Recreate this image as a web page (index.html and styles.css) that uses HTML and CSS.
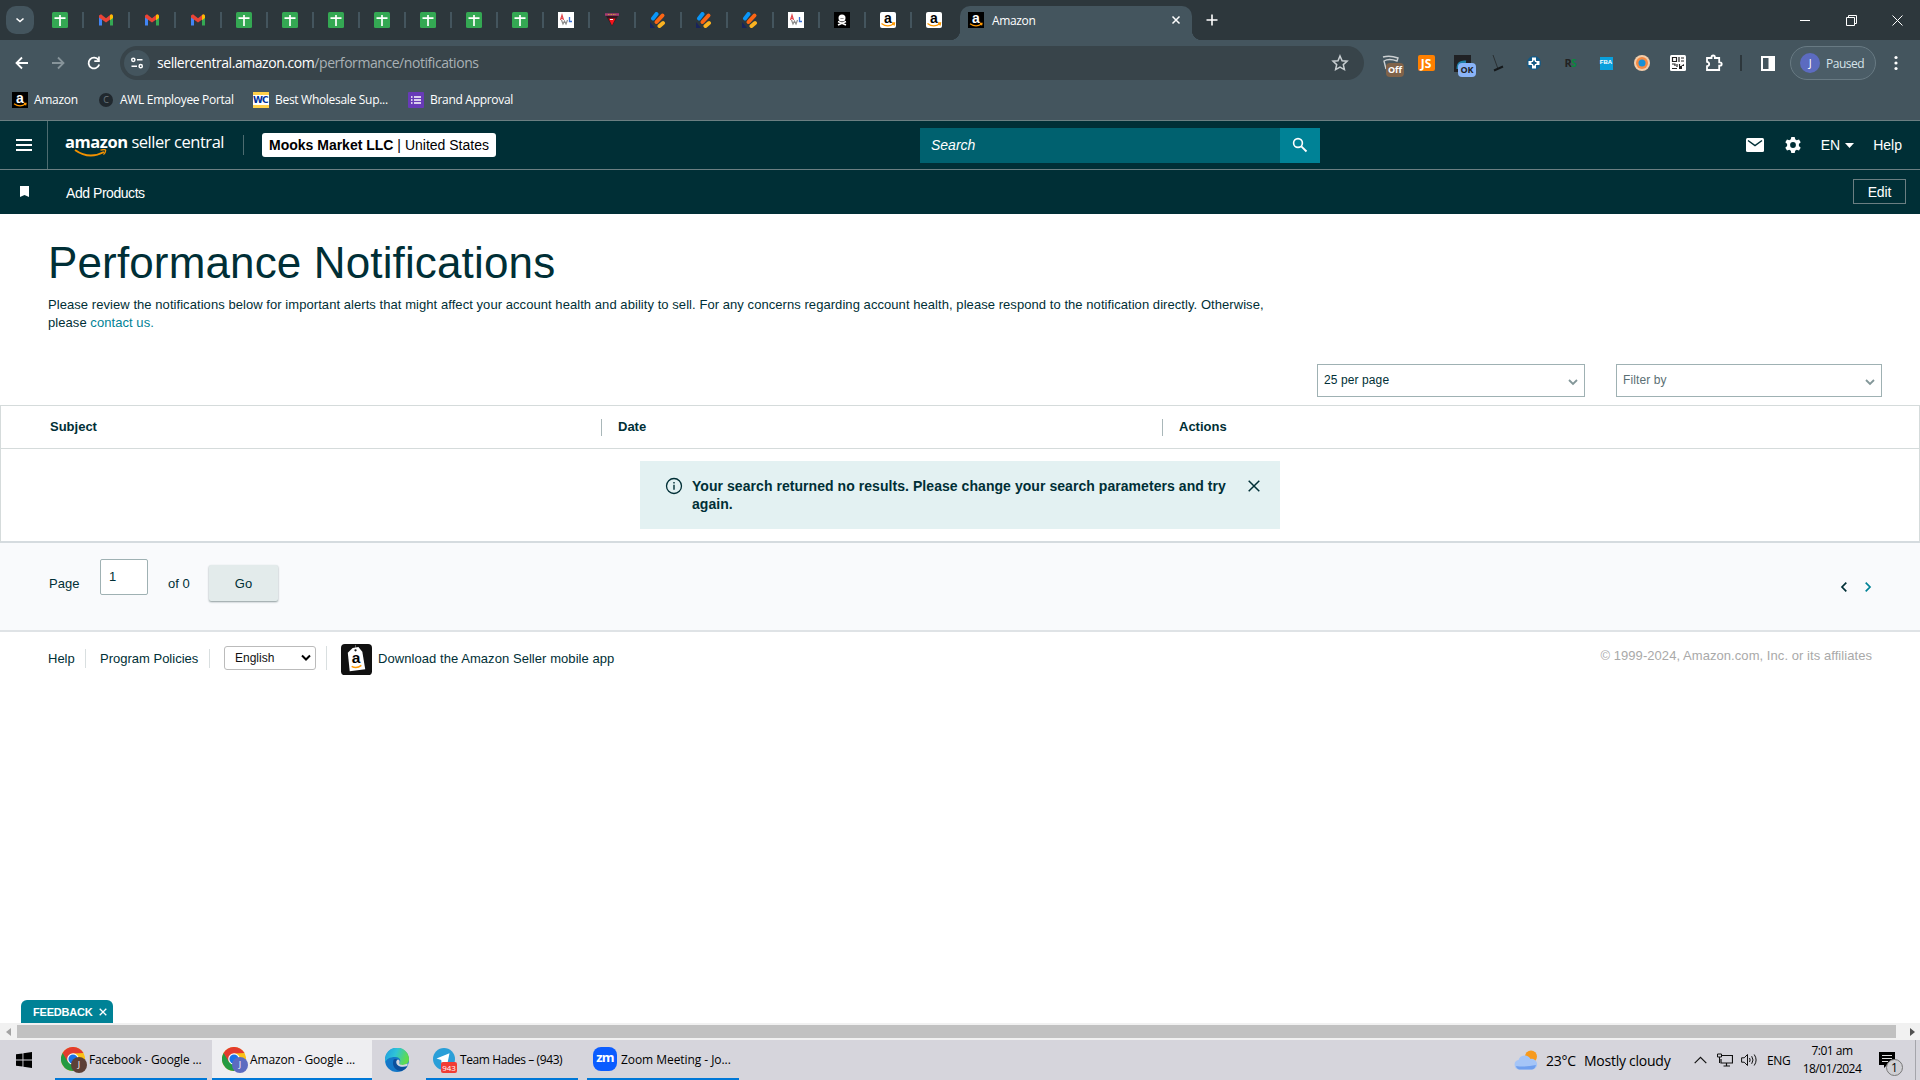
FILE: index.html
```
<!DOCTYPE html>
<html lang="en">
<head>
    <meta charset="UTF-8">
    <meta name="viewport" content="width=device-width, initial-scale=1.0">
    <title>Amazon</title>
    <link rel="stylesheet" href="styles.css">
</head>
<body>
    <!-- shared icons -->
    <svg class="defs" width="0" height="0">
        <symbol id="sheet" viewBox="0 0 16 16"><rect width="16" height="16" rx="1.500" fill="#34a853"/><path d="M2.500 6.200h11M8 3v11" stroke="#fff" stroke-width="1.700"/></symbol>
        <symbol id="gmail" viewBox="0 0 16 16"><path d="M1 4v9.500h3V7z" fill="#4285f4"/><path d="M15 4v9.500h-3V7z" fill="#34a853"/><path d="M1 3.500 3 2.300l5 4 5-4 2 1.200v2L8 10.500l-7-5z" fill="#ea4335"/><path d="M12 3 14 2.300l1 1.500V6l-3 2.200z" fill="#fbbc04"/></symbol>
        <symbol id="awl" viewBox="0 0 16 16"><rect width="16" height="16" fill="#fff"/><path d="m2.500 8 1.500-5 1.500 5M3 6.500h2" stroke="#e5484d" stroke-width="1.200" fill="none"/><path d="m3.500 8 1.500 4 1.500-3L8 12l1.500-4" stroke="#8d8d8d" stroke-width="1.200" fill="none"/><path d="M11.500 5v4.500H14" stroke="#3b6fd4" stroke-width="1.300" fill="none"/></symbol>
        <symbol id="tri" viewBox="0 0 16 16"><path d="M2 4h12L8 14z" fill="#34151f"/><path d="M4.500 6.500h7L8 13.500z" fill="#f5151c"/><path d="M1 2.500h14" stroke="#a83a72" stroke-width="2.500"/><path d="M4 2.500h8" stroke="#c79a3c" stroke-width="1" stroke-dasharray="1.500 1"/><path d="M6 7.500h3" stroke="#fff"/></symbol>
        <symbol id="slash" viewBox="0 0 16 16"><path d="M0 10v6h5z" fill="#18235c"/><g stroke-linecap="round" stroke-width="4"><path d="M3 6.500 6.500 2" stroke="#0a95f7"/><path d="M6.500 10 12.500 3.500" stroke="#fb6514"/><path d="m9.500 14 3.500-3" stroke="#fbb321"/></g></symbol>
        <symbol id="skull" viewBox="0 0 16 16"><rect width="16" height="16" fill="#000"/><circle cx="8" cy="6" r="3.500" fill="#fff"/><path d="m4 9.500 8 3.500M12 9.500 4 13" stroke="#fff" stroke-width="1.500"/><path d="M6.700 6.500h.8M8.500 6.500h.8" stroke="#000" stroke-width=".8"/></symbol>
        <symbol id="amz" viewBox="0 0 16 16" overflow="visible"><rect width="16" height="16" rx="2" fill="#fff"/><text x="7.800" y="10.600" text-anchor="middle" class="amz-a" fill="#000">a</text><path d="M1.500 11.500q6 4.500 12 .5M12 11h2.500l-.5 2.500" stroke="#ff9900" stroke-width="1.300" fill="none"/></symbol>
        <symbol id="amzdark" viewBox="0 0 16 16" overflow="visible"><rect width="16" height="16" fill="#000"/><text x="7.800" y="10.600" text-anchor="middle" class="amz-a" fill="#fff">a</text><path d="M2 11.700q6 4 11.500.3M12 11.300h2l-.4 2" stroke="#ff9900" stroke-width="1.200" fill="none"/></symbol>
        <symbol id="chrome" viewBox="0 0 24 24"><circle cx="12" cy="12" r="12" fill="#fbc116"/><path d="M1.600 6A12 12 0 0 0 12 24l5.200-9H12z" fill="#249a41"/><path d="M1.600 6a12 12 0 0 1 20.800 0L12 6.500 7 15z" fill="#e33b2e"/><circle cx="12" cy="12" r="5.800" fill="#fff"/><circle cx="12" cy="12" r="4.600" fill="#1a73e8"/></symbol>
        <symbol id="down" viewBox="0 0 10 8"><path d="m1 2 4 4 4-4" fill="none" stroke="#839799" stroke-width="1.800"/></symbol>
    </svg>

    <div class="tabstrip">
        <button class="tab-search"><svg width="10" height="10" viewBox="0 0 10 10"><path d="m1.500 3.500 3.500 3 3.500-3" fill="none" stroke="#fff" stroke-width="1.600"/></svg></button>
        <div class="tabs">
            <span class="tab"><svg><use href="#sheet"/></svg></span>
            <span class="tab"><svg><use href="#gmail"/></svg></span>
            <span class="tab"><svg><use href="#gmail"/></svg></span>
            <span class="tab"><svg><use href="#gmail"/></svg></span>
            <span class="tab"><svg><use href="#sheet"/></svg></span>
            <span class="tab"><svg><use href="#sheet"/></svg></span>
            <span class="tab"><svg><use href="#sheet"/></svg></span>
            <span class="tab"><svg><use href="#sheet"/></svg></span>
            <span class="tab"><svg><use href="#sheet"/></svg></span>
            <span class="tab"><svg><use href="#sheet"/></svg></span>
            <span class="tab"><svg><use href="#sheet"/></svg></span>
            <span class="tab"><svg><use href="#awl"/></svg></span>
            <span class="tab"><svg><use href="#tri"/></svg></span>
            <span class="tab"><svg><use href="#slash"/></svg></span>
            <span class="tab"><svg><use href="#slash"/></svg></span>
            <span class="tab"><svg><use href="#slash"/></svg></span>
            <span class="tab"><svg><use href="#awl"/></svg></span>
            <span class="tab"><svg><use href="#skull"/></svg></span>
            <span class="tab"><svg><use href="#amz"/></svg></span>
            <span class="tab last"><svg><use href="#amz"/></svg></span>
        </div>
        <div class="tab-active">
            <svg width="16" height="16"><use href="#amzdark"/></svg>
            <span class="tab-title">Amazon</span>
            <svg width="10" height="10" viewBox="0 0 10 10"><path d="m1.500 1.500 7 7m0-7-7 7" stroke="#fff" stroke-width="1.500"/></svg>
        </div>
        <svg class="new-tab" width="12" height="12" viewBox="0 0 12 12"><path d="M6 .5v11M.5 6h11" stroke="#fff" stroke-width="1.600"/></svg>
        <div class="win-controls">
            <span><svg width="10" height="10" viewBox="0 0 10 10"><path d="M0 5.500h10" stroke="#fff"/></svg></span>
            <span><svg width="11" height="11" viewBox="0 0 11 11"><path d="M.5 2.500h8v8h-8zM2.500 2.500v-2h8v8h-2" fill="none" stroke="#fff"/></svg></span>
            <span><svg width="11" height="11" viewBox="0 0 11 11"><path d="m.5.5 10 10m0-10-10 10" stroke="#fff"/></svg></span>
        </div>
    </div>

    <div class="toolbar">
        <div class="nav-btns">
            <svg width="16" height="16" viewBox="0 0 16 16"><path d="M14 8H3M8 2.500 2.500 8 8 13.500" fill="none" stroke="#fff" stroke-width="1.800"/></svg>
            <svg width="16" height="16" viewBox="0 0 16 16"><path d="M2 8h11M8 2.500 13.500 8 8 13.500" fill="none" stroke="#87949a" stroke-width="1.800"/></svg>
            <svg width="16" height="16" viewBox="0 0 16 16"><path d="M13.200 9.500A5.400 5.400 0 1 1 12.500 5" fill="none" stroke="#fff" stroke-width="1.800"/><path d="M13.800 1.500V7H8.300V5.300h3.800V1.500z" fill="#fff"/></svg>
        </div>
        <div class="omnibox">
            <span class="site-info"><svg width="14" height="14" viewBox="0 0 14 14"><g fill="none" stroke="#fff" stroke-width="1.500"><circle cx="3.300" cy="3.800" r="1.600"/><path d="M7 3.800h5.500M1.500 10.200H7"/><circle cx="10.700" cy="10.200" r="1.600"/></g></svg></span>
            <span class="url"><b>sellercentral.amazon.com</b>/performance/notifications</span>
            <svg width="18" height="18" viewBox="0 0 18 18"><path d="m9 2 2.100 4.700 5 .5-3.800 3.400 1.100 5L9 13l-4.400 2.600 1.100-5L2 7.200l5-.5z" fill="none" stroke="#c8ced1" stroke-width="1.500"/></svg>
        </div>
        <div class="extensions">
            <span class="ext"><svg width="18" height="18" viewBox="0 0 18 18"><path d="M2 3q7-2 15 1l-1 3Q8 4 3 7l2 8" fill="none" stroke="#ccd0d2" stroke-width="1.400"/></svg><i class="badge off">Off</i></span>
            <span class="ext"><b class="js">JS</b></span>
            <span class="ext"><svg width="17" height="17" viewBox="0 0 17 17"><path d="M0 0h17v17H0z" fill="#202124"/><path d="M4 14q0-8 8-7" stroke="#1f7fa5" stroke-width="3" fill="none"/></svg><i class="badge ok">OK</i></span>
            <span class="ext"><svg width="18" height="18" viewBox="0 0 18 18"><path d="m4 1 5 14" stroke="#2a3033"/><path d="m5 16.500 9-4" stroke="#15191b" stroke-width="2"/></svg></span>
            <span class="ext"><svg width="16" height="16" viewBox="0 0 16 16"><circle cx="8" cy="8" r="7" fill="#145a86"/><path d="M8 2.500v11M2.500 8h11" stroke="#fff" stroke-width="4"/><path d="M8 5.500v5M5.500 8h5" stroke="#145a86" stroke-width="1.800"/></svg></span>
            <span class="ext"><b class="rs">R<em>S</em></b></span>
            <span class="ext"><b class="fba">FBA</b></span>
            <span class="ext"><svg width="16" height="16" viewBox="0 0 16 16"><circle cx="8" cy="8" r="8" fill="#f2cdaa"/><circle cx="8" cy="8" r="6" fill="#f58a43"/><circle cx="8" cy="8" r="3.500" fill="#1690d6"/></svg></span>
            <span class="ext"><svg width="16" height="16" viewBox="0 0 16 16"><rect width="16" height="16" rx="1.500" fill="#fff"/><g fill="none" stroke="#222" stroke-width="1.200"><path d="M2.500 2.500h4v4h-4zM9 2v5M11 3h3M11 6h3M2 9h3v2M7 9v3M2 13.500h5M9.500 9v2"/></g><path d="M9 11h2l3-2v2h-2v3H9z" fill="#222"/></svg></span>
            <span class="ext"><svg width="20" height="20" viewBox="0 0 20 20"><path d="M3 5h4.500v-.8a1.700 1.700 0 0 1 3.400 0V5h4.300v4.300h.8a1.700 1.700 0 0 1 0 3.400h-.8V17H3v-3.800q2.200-.3 2.200-2.200T3 8.800z" fill="none" stroke="#fff" stroke-width="1.800"/></svg></span>
        </div>
        <span class="tool-sep"></span>
        <svg class="panel" width="14" height="15" viewBox="0 0 14 15"><path d="M1 1h12v13H1z" fill="none" stroke="#fff" stroke-width="2"/><path d="M7.500 1H13v13H7.500z" fill="#fff"/></svg>
        <div class="profile"><span class="avatar">J</span>Paused</div>
        <svg width="4" height="16" viewBox="0 0 4 16"><g fill="#fff"><circle cx="2" cy="2.500" r="1.600"/><circle cx="2" cy="8" r="1.600"/><circle cx="2" cy="13.500" r="1.600"/></g></svg>
    </div>

    <div class="bookmarks">
        <span class="bm bm-amazon"><svg width="16" height="16"><use href="#amzdark"/></svg><span>Amazon</span></span>
        <span class="bm bm-awl"><i class="c-icon">C</i><span>AWL Employee Portal</span></span>
        <span class="bm bm-wc"><i class="wc-icon">WC</i><span>Best Wholesale Sup...</span></span>
        <span class="bm"><svg width="16" height="16" viewBox="0 0 16 16"><rect width="16" height="16" rx="1" fill="#673ab7"/><path d="M3 5h1.500M3 8h1.500M3 11h1.500M6 5h7M6 8h7M6 11h7" stroke="#fff" stroke-width="1.600"/></svg><span>Brand Approval</span></span>
    </div>

    <header class="sc-header">
        <span class="menu"><svg width="16" height="12" viewBox="0 0 16 12"><path d="M0 1h16M0 6h16M0 11h16" stroke="#fff" stroke-width="2"/></svg></span>
        <div class="logo">
            <span><b>amazon</b> seller central</span>
            <svg width="34" height="9" viewBox="0 0 34 9"><path d="M1 1q14 10 29 2" fill="none" stroke="#f29100" stroke-width="1.900"/><path d="M26.500 1.200q4-1.200 5-.2.600 2-2 4.600" fill="none" stroke="#f29100" stroke-width="1.300"/></svg>
        </div>
        <span class="logo-sep"></span>
        <span class="account"><b>Mooks Market LLC</b> | United States</span>
        <div class="search">
            <span class="search-text">Search</span>
            <span class="search-btn"><svg width="16" height="16" viewBox="0 0 16 16"><circle cx="6" cy="6" r="4.400" fill="none" stroke="#fff" stroke-width="1.600"/><path d="m9.300 9.300 5.200 5.200" stroke="#fff" stroke-width="1.900"/></svg></span>
        </div>
        <div class="sc-tools">
            <svg width="18" height="14" viewBox="0 0 18 14"><rect width="18" height="14" rx="1.500" fill="#fff"/><path d="m2 2.500 7 5 7-5" fill="none" stroke="#002f36" stroke-width="1.500"/></svg>
            <svg class="gear" width="18" height="18" viewBox="0 0 18 18"><path d="M7.300 1h3.400l.5 2.300 1.500.9 2.300-.8 1.700 2.900-1.800 1.600v2.200l1.800 1.600-1.700 2.900-2.300-.8-1.500.9-.5 2.300H7.300l-.5-2.300-1.500-.9-2.300.8-1.700-2.900 1.800-1.600V7.900L1.300 6.300 3 3.400l2.300.8 1.500-.9z" fill="#fff"/><circle cx="9" cy="9" r="2.900" fill="#002f36"/></svg>
            <span class="lang">EN <svg width="9" height="5" viewBox="0 0 9 5"><path d="M0 0h9L4.500 5z" fill="#fff"/></svg></span>
            <span>Help</span>
        </div>
    </header>

    <nav class="sc-subnav">
        <svg width="9" height="11" viewBox="0 0 9 11"><path d="M0 0h9v11L4.500 9 0 11z" fill="#fff"/></svg>
        <span class="add">Add Products</span>
        <button class="edit">Edit</button>
    </nav>

    <main class="content">
        <h1>Performance Notifications</h1>
        <p class="intro">Please review the notifications below for important alerts that might affect your account health and ability to sell. For any concerns regarding account health, please respond to the notification directly. Otherwise,<br>please <a>contact us.</a></p>

        <div class="filters">
            <div class="dropdown per-page">25 per page<svg width="10" height="8"><use href="#down"/></svg></div>
            <div class="dropdown filter-by">Filter by<svg width="10" height="8"><use href="#down"/></svg></div>
        </div>

        <section class="table">
            <div class="table-head">
                <span>Subject</span>
                <span>Date</span>
                <span>Actions</span>
            </div>
            <div class="alert">
                <svg width="18" height="18" viewBox="0 0 18 18"><circle cx="9" cy="9" r="7.500" fill="none" stroke="#002f36" stroke-width="1.300"/><path d="M9 7.800v5M9 5v1.500" stroke="#002f36" stroke-width="1.400"/></svg>
                <span class="alert-text">Your search returned no results. Please change your search parameters and try<br>again.</span>
                <svg width="12" height="12" viewBox="0 0 12 12"><path d="m.7.700 10.600 10.600m0-10.600L.7 11.300" stroke="#002f36" stroke-width="1.500"/></svg>
            </div>
        </section>

        <div class="pagination">
            <span class="page-label">Page</span>
            <span class="page-input">1</span>
            <span class="page-of">of 0</span>
            <button class="go">Go</button>
            <div class="arrows">
                <svg width="8" height="10" viewBox="0 0 8 10"><path d="M6.300.7 2 5l4.300 4.300" fill="none" stroke="#002f36" stroke-width="1.700"/></svg>
                <svg width="8" height="10" viewBox="0 0 8 10"><path d="M1.700.7 6 5 1.700 9.300" fill="none" stroke="#008296" stroke-width="1.700"/></svg>
            </div>
        </div>

        <footer class="sc-footer">
            <span class="f-help">Help</span>
            <span class="f-policies">Program Policies</span>
            <span class="f-lang"><span class="lang-select">English<svg width="10" height="8" viewBox="0 0 10 8"><path d="m1 1.500 4 4 4-4" fill="none" stroke="#000" stroke-width="2"/></svg></span></span>
            <svg class="app-icon" width="31" height="31" viewBox="0 0 32 32"><rect width="32" height="32" rx="4" fill="#111"/><path d="M15 1v5" stroke="#666"/><path d="m12 4 6-1 4 5 3 18-16 2L7 9z" fill="#fff"/><circle cx="15" cy="6.500" r="1.200" fill="#111"/><text x="15.500" y="20" text-anchor="middle" class="app-a">a</text><path d="M11 23q5 3 10-1" fill="none" stroke="#f90" stroke-width="1.500"/></svg>
            <span class="f-app">Download the Amazon Seller mobile app</span>
            <span class="copyright">© 1999-2024, Amazon.com, Inc. or its affiliates</span>
        </footer>

        <div class="feedback">FEEDBACK<svg width="8" height="8" viewBox="0 0 8 8"><path d="m.7.700 6.600 6.600m0-6.600L.7 7.300" stroke="#fff" stroke-width="1.300"/></svg></div>
    </main>

    <div class="scrollbar">
        <span class="sb-arrow"><svg width="5" height="8" viewBox="0 0 5 8"><path d="M5 0v8L0 4z" fill="#a3a3a3"/></svg></span>
        <span class="thumb"></span>
        <span class="sb-arrow right"><svg width="5" height="8" viewBox="0 0 5 8"><path d="M0 0v8l5-4z" fill="#505050"/></svg></span>
    </div>

    <div class="taskbar">
        <span class="start"><svg width="16" height="16" viewBox="0 0 16 16"><path d="M0 2.300 6.500 1.400v6.100H0zM7.400 1.300 16 0v7.500H7.400zM0 8.400h6.500v6.200L0 13.700zM7.400 8.400H16V16l-8.600-1.300z"/></svg></span>
        <div class="task facebook"><span class="task-icon"><svg width="24" height="24"><use href="#chrome"/></svg><i class="mini brown">J</i></span>Facebook - Google ...</div>
        <div class="task current"><span class="task-icon"><svg width="24" height="24"><use href="#chrome"/></svg><i class="mini blue">J</i></span>Amazon - Google ...</div>
        <span class="edge"><svg width="24" height="24" viewBox="0 0 24 24"><defs><linearGradient id="eg" x1="0" y1="0" x2="1" y2=".3"><stop offset="0" stop-color="#1f9be0"/><stop offset=".5" stop-color="#2fc3d8"/><stop offset="1" stop-color="#5fdc4c"/></linearGradient></defs><circle cx="12" cy="12" r="12" fill="#1478c8"/><path d="M0 12a12 12 0 0 1 24-1c0 4-3 6-6.500 6-3 0-3.500-1-3-2 2-3 0-6-4.500-6-5 0-9 2-10 6z" fill="url(#eg)"/><path d="M8.500 12c-2 6 2 11 8 11 3-1 5-3 6-5-6 2.500-11 0-11-4 0-1 .3-2 1-2.500-1.500-1-3.500-.5-4 .5z" fill="#0c4f9c"/><path d="M13 11.500c1.800.5 2 2 1.300 3.600-.4 1.200 1 2 3.500 2l5-1.500-.5 2.300c-6 2-11 0-11-4 0-1 .7-2 1.700-2.400z" fill="#d6d5dd"/></svg></span>
        <div class="task telegram"><span class="task-icon"><svg width="24" height="24" viewBox="0 0 24 24"><circle cx="12" cy="12" r="11" fill="#2a9fd8"/><path d="m4.500 11.500 13-5.300-2.300 11.500-3.500-2.600-2 1.700-.5-3.700z" fill="#fff"/></svg><i class="count">943</i></span>Team Hades – (943)</div>
        <div class="task zoomapp"><span class="zm">zm</span>Zoom Meeting - Jo...</div>

        <div class="tray">
            <svg class="weather" width="24" height="20" viewBox="0 0 24 20"><circle cx="17" cy="6.500" r="6" fill="#f79a1d"/><path d="M5 19.500a4.800 4.800 0 0 1-.5-9.500A6.500 6.500 0 0 1 16.500 9a5.300 5.300 0 0 1 2.500 10.500z" fill="#a5c5f7"/><path d="M4 19a4 4 0 0 1-2-3q9 1.500 20-1-1 4-4 4.500H5z" fill="#6f9fee"/></svg>
            <span class="temp">23°C</span>
            <span class="cloudy">Mostly cloudy</span>
            <svg class="up" width="13" height="8" viewBox="0 0 13 8"><path d="M.7 7.200 6.500 1.400l5.800 5.800" fill="none" stroke="#111" stroke-width="1.200"/></svg>
            <svg class="net" width="16" height="14" viewBox="0 0 16 14"><path d="M5 2.500h10.500v7.500H4V6M9.500 10v3M6.500 13h6.500" fill="none" stroke="#111" stroke-width="1.200"/><path d="M.5 1h4v3h-4zM2.500 4v6" fill="none" stroke="#111"/></svg>
            <svg class="sound" width="17" height="14" viewBox="0 0 17 14"><path d="M.6 4.800h2.600L6.500 1.500v11L3.200 9.200H.6z" fill="none" stroke="#111"/><path d="M8.500 5q1.300 2 0 4M10.700 3.200q2.600 3.800 0 7.600M13.200 1.500q3.800 5.500 0 11" fill="none" stroke="#111"/></svg>
            <span class="eng">ENG</span>
            <div class="clock"><span class="time">7:01 am</span><span>18/01/2024</span></div>
            <span class="notif"><svg width="16" height="16" viewBox="0 0 16 16"><path d="M0 0h16v13H8l-3 3v-3H0z"/><path d="M3 3.500h10M3 6.500h10M3 9.500h6" stroke="#ddd"/></svg><i class="notif-n">1</i></span>
            <span class="desk"></span>
        </div>
    </div>
</body>
</html>
```
FILE: styles.css
```
* {
    box-sizing: border-box;
}
body {
    margin: 0;
    width: 1920px;
    height: 1080px;
    overflow: hidden;
    display: flex;
    flex-direction: column;
    background: #fff;
    font-family: "Liberation Sans", Arial, sans-serif;
    font-size: 13px;
    color: #002f36;
}
svg {
    display: block;
    flex: none;
}
i, em {
    font-style: normal;
}
button {
    font-family: inherit;
    padding: 0;
}
.defs {
    position: absolute;
    overflow: visible;
}
.amz-a {
    font: bold 14px "Liberation Sans", sans-serif;
}

/* browser tabs */
.tabstrip, .toolbar, .bookmarks {
    font-family: "Open Sans", "Noto Sans", sans-serif;
    font-size: 12px;
    color: #fff;
    display: flex;
    align-items: center;
    flex: none;
}
.tabstrip {
    height: 40px;
    background: #2d373c;
}
.tab-search {
    width: 28px;
    height: 28px;
    margin-left: 6px;
    border: none;
    border-radius: 10px;
    background: #44555e;
    display: flex;
    align-items: center;
    justify-content: center;
}
.tabs {
    display: flex;
    margin-left: 4px;
}
.tab {
    width: 46px;
    height: 16px;
    padding-left: 14px;
    border-right: 2px solid #44555e;
}
.tab svg {
    width: 16px;
    height: 16px;
    overflow: visible;
}
.tab.last {
    border-color: transparent;
}
.tab-active {
    align-self: flex-end;
    display: flex;
    align-items: center;
    width: 232px;
    height: 34px;
    margin-left: 2px;
    padding: 0 11px 6px 8px;
    background: #44555e;
    border-radius: 10px 10px 0 0;
    position: relative;
}
.tab-active::before, .tab-active::after {
    content: "";
    position: absolute;
    bottom: 0;
    width: 10px;
    height: 10px;
}
.tab-active::before {
    left: -10px;
    background: radial-gradient(circle at 0 0, transparent 10px, #44555e 10.5px);
}
.tab-active::after {
    right: -10px;
    background: radial-gradient(circle at 100% 0, transparent 10px, #44555e 10.5px);
}
.tab-title {
    flex: 1;
    padding: 1px 0 0 8px;
    letter-spacing: -0.35px;
}
.new-tab {
    margin-left: 14px;
}
.win-controls {
    display: flex;
    margin-left: auto;
}
.win-controls span {
    width: 46px;
    display: flex;
    justify-content: center;
}

/* address row */
.toolbar {
    height: 46px;
    background: #44555e;
}
.nav-btns {
    display: flex;
    gap: 20px;
    padding-left: 14px;
    width: 120px;
}
.omnibox {
    display: flex;
    align-items: center;
    width: 1244px;
    height: 34px;
    border-radius: 17px;
    background: #38444a;
    padding: 0 15px 0 4px;
}
.site-info {
    width: 26px;
    height: 26px;
    border-radius: 50%;
    background: #44555e;
    display: flex;
    align-items: center;
    justify-content: center;
}
.url {
    flex: 1;
    padding: 0 0 1px 7px;
    font-size: 14px;
    letter-spacing: -0.44px;
    color: #a9b1b5;
}
.url b {
    font-weight: normal;
    color: #fff;
}
.extensions {
    display: flex;
    margin-left: 8px;
}
.ext {
    position: relative;
    width: 36px;
    height: 20px;
    display: flex;
    align-items: center;
    justify-content: center;
}
.badge {
    position: absolute;
    left: 14px;
    top: 10px;
    width: 18px;
    height: 14px;
    border-radius: 4px;
    font-size: 9px;
    font-weight: bold;
    line-height: 14px;
    text-align: center;
}
.off {
    background: #80634a;
}
.ok {
    background: #8ab4f8;
    color: #202124;
}
.js {
    width: 17px;
    height: 16px;
    line-height: 17px;
    border-radius: 2px;
    text-align: center;
    background: #ff8000;
}
.rs {
    font-size: 11px;
    line-height: 16px;
    letter-spacing: -1px;
    color: #222;
}
.rs em {
    color: #078a3c;
    font-size: 10px;
}
.fba {
    width: 13px;
    height: 13px;
    background: #0aa0dc;
    font: bold 6px/11px "Liberation Sans", sans-serif;
    text-align: center;
}
.tool-sep {
    width: 2px;
    height: 16px;
    margin-left: 8px;
    background: #2d373c;
}
.panel {
    margin-left: 19px;
}
.profile {
    display: flex;
    align-items: center;
    width: 86px;
    height: 34px;
    margin: 0 18px 0 15px;
    padding-left: 9px;
    border: 1px solid #687a83;
    border-radius: 17px;
    background: #4b5d67;
    color: #d5e3ea;
    letter-spacing: -0.5px;
}
.avatar {
    width: 20px;
    height: 20px;
    margin-right: 6px;
    border-radius: 50%;
    background: #5c6bc0;
    color: #fff;
    font-size: 11px;
    line-height: 20px;
    text-align: center;
}
.bookmarks {
    height: 34px;
    padding: 0 0 6px 12px;
    background: #44555e;
}
.bm {
    display: flex;
    align-items: center;
    gap: 6px;
    white-space: nowrap;
    letter-spacing: -0.3px;
}
.bm span {
    margin-top: -1px;
}
.bm-amazon {
    width: 87px;
}
.bm-awl {
    width: 154px;
    gap: 7px;
}
.bm-wc {
    width: 155px;
}
.c-icon {
    width: 14px;
    height: 14px;
    border-radius: 50%;
    background: #20282e;
    color: #6b777e;
    font-size: 9px;
    line-height: 14px;
    text-align: center;
}
.wc-icon {
    width: 16px;
    height: 16px;
    border: solid #ffd04a;
    border-width: 3px 0;
    background: #fff;
    color: #00309a;
    font: bold 9px/10px "DejaVu Sans", sans-serif;
    letter-spacing: -1px;
}

/* seller central header */
.sc-header {
    flex: none;
    display: flex;
    align-items: center;
    height: 50px;
    background: #002f36;
    border: solid #6b7f82;
    border-width: 1px 0;
    color: #fff;
    font-size: 14px;
}
.menu {
    width: 48px;
    height: 48px;
    padding: 18px 0 0 16px;
    border-right: 1px solid #4d6c70;
}
.logo {
    width: 177px;
    height: 38px;
    padding: 6px 0 0 17px;
    font: 16.500px/20px "Open Sans", sans-serif;
    letter-spacing: -0.45px;
    white-space: nowrap;
}
.logo svg {
    margin: -3px 0 0 9px;
}
.logo-sep {
    width: 1px;
    height: 20px;
    margin-left: 18px;
    background: #4d6c70;
}
.account {
    width: 234px;
    height: 24px;
    margin-left: 18px;
    padding-left: 7px;
    border-radius: 3px;
    background: #fff;
    color: #000;
    line-height: 24px;
    white-space: nowrap;
}
.search {
    display: flex;
    width: 400px;
    height: 35px;
    margin-left: 424px;
    background: #00616f;
}
.search-text {
    flex: 1;
    padding-left: 11px;
    line-height: 34px;
    font-style: italic;
}
.search-btn {
    width: 40px;
    padding: 9px 0 0 12px;
    background: #008296;
}
.sc-tools {
    display: flex;
    align-items: center;
    margin: 0 18px 0 auto;
}
.gear {
    margin: 0 19px 0 20px;
}
.lang {
    display: flex;
    align-items: center;
    gap: 5px;
    margin-right: 19px;
}
.sc-subnav {
    flex: none;
    display: flex;
    align-items: center;
    height: 44px;
    padding: 0 14px 0 20px;
    background: #002f36;
    color: #fff;
}
.sc-subnav svg {
    margin-bottom: 2px;
}
.add {
    margin: 2px 0 0 37px;
    font-size: 14px;
    letter-spacing: -0.45px;
}
.edit {
    width: 53px;
    height: 25px;
    margin: 0 0 1px auto;
    border: 1px solid #6b7f82;
    background: none;
    color: #fff;
    font-size: 14px;
    letter-spacing: -0.1px;
}

/* page */
.content {
    flex: 1;
    display: flex;
    flex-direction: column;
}
h1 {
    margin: 22px 0 0 48px;
    font-size: 44px;
    line-height: 54px;
    font-weight: normal;
    letter-spacing: 0.14px;
}
.intro {
    margin: 6px 0 0 48px;
    line-height: 18px;
    white-space: nowrap;
    letter-spacing: 0.06px;
}
.intro a {
    color: #008296;
}
.filters {
    display: flex;
    justify-content: flex-end;
    gap: 31px;
    margin: 32px 38px 8px 0;
}
.dropdown {
    display: flex;
    justify-content: space-between;
    height: 33px;
    padding: 0 6px;
    border: 1px solid #9fb1b3;
    font-size: 12px;
    line-height: 30px;
}
.dropdown svg {
    margin-top: 13px;
}
.per-page {
    width: 268px;
    letter-spacing: 0.1px;
}
.filter-by {
    width: 266px;
    color: #5b7074;
    letter-spacing: 0.1px;
}
.table {
    height: 138px;
    border: 1px solid #d5dbdb;
    border-bottom: 2px solid #d5dbdf;
}
.table-head {
    display: grid;
    grid-template-columns: 600px 561px 1fr;
    align-items: center;
    height: 43px;
    border-bottom: 1px solid #d5dbdb;
    font-weight: bold;
}
.table-head span {
    height: 17px;
    line-height: 15px;
    padding-left: 16px;
    border-left: 1px solid #a9b7b9;
}
.table-head span:first-child {
    padding-left: 49px;
    border: none;
}
.alert {
    display: flex;
    width: 640px;
    height: 68px;
    margin: 12px auto 0;
    padding: 16px 20px 0 25px;
    background: #e3f1f2;
}
.alert-text {
    flex: 1;
    padding-left: 9px;
    font-size: 14px;
    font-weight: bold;
    line-height: 18px;
    white-space: nowrap;
    letter-spacing: 0.055px;
}
.alert svg:last-child {
    margin-top: 3px;
}
.pagination {
    display: flex;
    height: 89px;
    padding: 16px 48px 0 49px;
    background: #f9fafc;
    border-bottom: 2px solid #dfe3e6;
}
.page-label {
    width: 51px;
    line-height: 50px;
}
.page-input {
    width: 48px;
    height: 36px;
    padding-left: 8px;
    border: 1px solid #9fb1b3;
    border-radius: 2px;
    background: #fff;
    line-height: 33px;
}
.page-of {
    width: 60px;
    padding-left: 20px;
    line-height: 50px;
}
.go {
    width: 69px;
    height: 36px;
    margin: 6px 0 0 1px;
    border: none;
    border-radius: 2px;
    background: #e3ebeb;
    box-shadow: 0 1px 2px #8c9a9c;
    color: #002f36;
    font-size: 13px;
}
.arrows {
    display: flex;
    gap: 16px;
    margin: 23px 0 0 auto;
}
.sc-footer {
    display: flex;
    align-items: center;
    height: 52px;
    padding: 0 48px;
}
.f-help {
    width: 38px;
    line-height: 19px;
    border-right: 1px solid #d9dfe0;
}
.f-policies {
    width: 124px;
    padding-left: 14px;
    line-height: 19px;
    border-right: 1px solid #d9dfe0;
}
.f-lang {
    width: 117px;
    padding-left: 14px;
    border-right: 1px solid #d9dfe0;
}
.lang-select {
    display: flex;
    align-items: center;
    justify-content: space-between;
    width: 92px;
    height: 24px;
    padding: 0 4px 0 10px;
    border: 1px solid #bbb;
    border-radius: 3px;
    font-size: 12px;
    color: #111;
}
.app-icon {
    margin: 2px 6px 0 14px;
}
.app-a {
    font: bold 16px "Liberation Sans", sans-serif;
}
.f-app {
    letter-spacing: 0.06px;
}
.copyright {
    margin: 0 0 6px auto;
    color: #a9a9a9;
    letter-spacing: 0.06px;
}
.feedback {
    display: flex;
    align-items: center;
    gap: 6px;
    width: 92px;
    height: 23px;
    margin: auto 0 0 21px;
    padding-left: 12px;
    border-radius: 6px 6px 0 0;
    background: #008296;
    color: #fff;
    font-size: 11px;
    font-weight: bold;
    letter-spacing: -0.2px;
}
.scrollbar {
    flex: none;
    display: flex;
    align-items: center;
    height: 17px;
    background: #f1f1f1;
}
.sb-arrow {
    width: 17px;
    padding-left: 6px;
}
.sb-arrow.right {
    padding-left: 14px;
    width: 24px;
}
.thumb {
    flex: 1;
    height: 13px;
    background: #c1c1c1;
}

/* windows taskbar */
.taskbar {
    flex: none;
    display: flex;
    align-items: center;
    height: 40px;
    background: #d6d5dc;
    color: #000;
    font-family: "Open Sans", "Noto Sans", sans-serif;
    font-size: 12px;
}
.start {
    width: 55px;
    padding-left: 16px;
}
.task {
    display: flex;
    align-items: center;
    gap: 4px;
    width: 152px;
    height: 40px;
    padding-left: 6px;
    border-bottom: 2px solid #0078d7;
    white-space: nowrap;
    letter-spacing: -0.14px;
}
.current {
    width: 160px;
    margin-left: 5px;
    padding-left: 10px;
    background: #eeeef1;
}
.telegram {
    letter-spacing: -0.4px;
}
.task-icon {
    position: relative;
}
.mini {
    position: absolute;
    left: 10px;
    top: 10px;
    width: 16px;
    height: 16px;
    border-radius: 50%;
    color: #fff;
    font-size: 9px;
    line-height: 16px;
    text-align: center;
}
.brown {
    background: #5d4037;
}
.blue {
    background: #5c6bc0;
}
.count {
    position: absolute;
    left: 9px;
    top: 15px;
    width: 16px;
    height: 11px;
    border-radius: 2px;
    background: #f23c34;
    color: #fff;
    font-size: 8px;
    line-height: 11px;
    text-align: center;
    letter-spacing: 0;
}
.edge {
    width: 54px;
    padding-left: 13px;
}
.zoomapp {
    margin-left: 9px;
    letter-spacing: -0.06px;
}
.zm {
    width: 24px;
    height: 24px;
    border-radius: 8px;
    background: #0b5cff;
    color: #fff;
    font-size: 13px;
    font-weight: bold;
    line-height: 21px;
    text-align: center;
    letter-spacing: -0.8px;
}
.tray {
    display: flex;
    align-items: center;
    height: 40px;
    margin-left: auto;
}
.temp, .cloudy {
    font-size: 14px;
    letter-spacing: -0.25px;
    white-space: nowrap;
}
.temp {
    width: 38px;
    margin-left: 8px;
}
.cloudy {
    width: 110px;
}
.net {
    margin: 0 8px 0 10px;
}
.eng {
    width: 35px;
    margin-left: 9px;
    letter-spacing: -0.3px;
}
.clock {
    display: flex;
    flex-direction: column;
    align-items: center;
    width: 60px;
    line-height: 18px;
    letter-spacing: -0.5px;
}
.notif {
    position: relative;
    margin-left: 17px;
}
.notif-n {
    position: absolute;
    left: 7px;
    top: 7px;
    width: 17px;
    height: 17px;
    border: 1px solid #777;
    border-radius: 50%;
    background: #cfcfd3;
    line-height: 15px;
    text-align: center;
}
.desk {
    width: 5px;
    height: 40px;
    margin-left: 20px;
    border-left: 1px solid #a5a5ab;
}
```
